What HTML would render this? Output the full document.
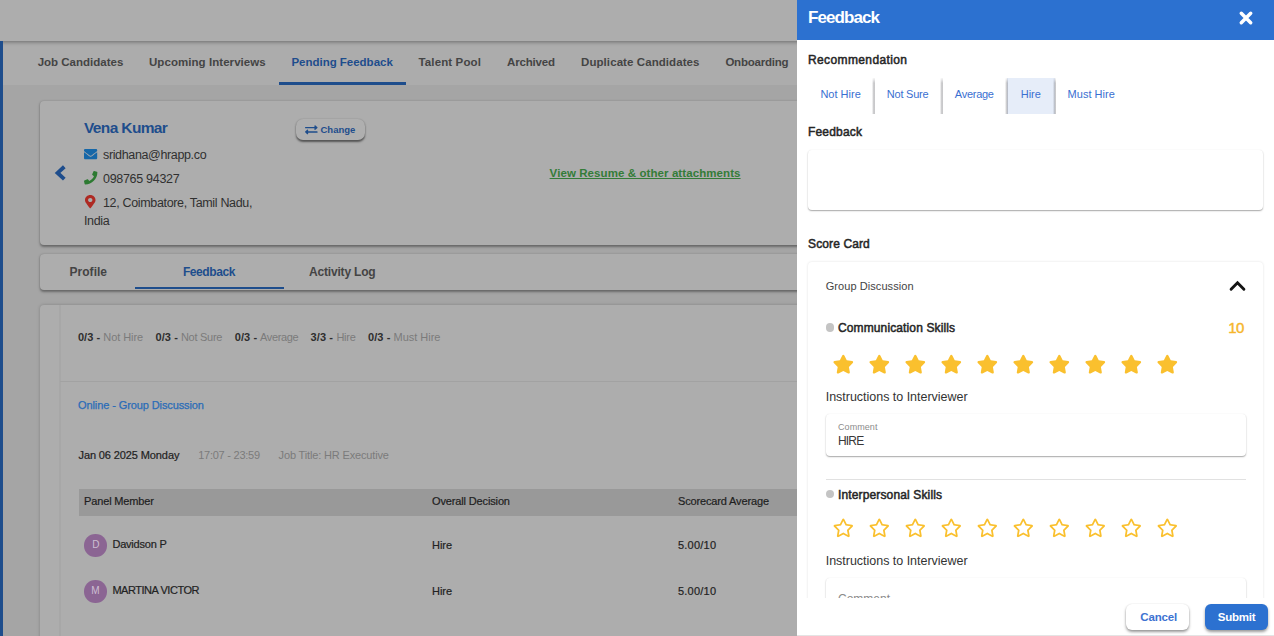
<!DOCTYPE html>
<html lang="en">
<head>
<meta charset="utf-8">
<title>Feedback</title>
<style>
*{box-sizing:border-box;margin:0;padding:0}
html,body{width:1274px;height:636px;overflow:hidden;background:#a5a5a5;font-family:"Liberation Sans",sans-serif}
.abs{position:absolute}
.t{position:absolute;white-space:nowrap;line-height:20px;height:20px;font-family:"Liberation Sans",sans-serif}
#bg{position:absolute;left:0;top:0;width:1274px;height:636px;overflow:hidden;background:#a5a5a5}
#panel{position:absolute;left:0;top:0;width:1274px;height:636px;overflow:hidden;pointer-events:none}
svg{position:absolute;overflow:visible}
</style>
</head>
<body>
<div id="bg">
  <!-- tab bar -->
  <div class="abs" style="left:0;top:41px;width:1274px;height:44px;background:#acacac"></div>
  <!-- top bar -->
  <div class="abs" style="left:0;top:0;width:1274px;height:41px;background:#adadad;box-shadow:0 1px 4px rgba(0,0,0,.38)"></div>
  <!-- left blue stripe -->
  <div class="abs" style="left:0;top:41px;width:3.400px;height:600px;background:#1e4d8c"></div>
  <!-- active tab indicator -->
  <div class="abs" style="left:279px;top:81.9px;width:126.5px;height:2.9px;background:#1e4d8c"></div>

  <!-- candidate card -->
  <div class="abs" style="left:39.5px;top:101px;width:1196px;height:144px;background:#adadad;border-radius:4px;box-shadow:0 1.500px 2.500px rgba(0,0,0,.36),0 0 2px rgba(0,0,0,.10)"></div>
  <!-- back chevron -->
  <svg style="left:54px;top:164px" width="13" height="18" viewBox="0 0 13 18"><polyline points="10.300,2.700 3.600,8.900 10.300,15.100" fill="none" stroke="#1e4d8c" stroke-width="3.900" stroke-linecap="butt" stroke-linejoin="miter"/></svg>
  <!-- mail icon -->
  <svg style="left:84px;top:149px" width="13.2" height="10.2" viewBox="0 64 512 384" preserveAspectRatio="none"><path fill="#1667a8" d="M502.3 190.800c3.900-3.100 9.700-.200 9.700 4.700V400c0 26.500-21.500 48-48 48H48c-26.500 0-48-21.500-48-48V195.600c0-5 5.700-7.800 9.700-4.700 22.400 17.400 52.100 39.500 154.100 113.600 21.100 15.400 56.700 47.800 92.200 47.600 35.700.3 72-32.800 92.300-47.600 102-74.100 131.600-96.300 154-113.700zM256 320c23.200.4 56.600-29.200 73.400-41.400 132.700-96.300 142.800-104.700 173.400-128.700 5.800-4.500 9.200-11.500 9.200-18.900v-19c0-26.500-21.500-48-48-48H48C21.500 64 0 85.500 0 112v19c0 7.400 3.400 14.300 9.200 18.900 30.600 23.900 40.700 32.400 173.400 128.700 16.800 12.200 50.200 41.800 73.400 41.400z"/></svg>
  <!-- phone icon -->
  <svg style="left:84px;top:171.2px" width="13.4" height="13.4" viewBox="0 0 512 512"><path fill="#2d7a32" d="M493.400 24.600l-104-24c-11.300-2.600-22.900 3.300-27.500 13.900l-48 112c-4.200 9.800-1.400 21.300 6.900 28l60.600 49.600c-36 76.700-98.900 140.500-177.200 177.200l-49.600-60.600c-6.800-8.300-18.200-11.100-28-6.900l-112 48C3.900 366.500-2 378.100.6 389.400l24 104C27.100 504.200 36.700 512 48 512c256.100 0 464-207.500 464-464 0-11.200-7.700-20.900-18.600-23.400z"/></svg>
  <!-- pin icon -->
  <svg style="left:85px;top:195.200px" width="10.500" height="13.200" viewBox="0 0 384 512" preserveAspectRatio="none"><path fill="#ae2a23" fill-rule="evenodd" d="M172.268 501.670C26.970 291.031 0 269.413 0 192 0 85.961 85.961 0 192 0s192 85.961 192 192c0 77.413-26.970 99.031-172.268 309.670-9.535 13.774-29.930 13.773-39.464 0zM192 272c44.183 0 80-35.817 80-80s-35.817-80-80-80-80 35.817-80 80 35.817 80 80 80z"/></svg>
  <!-- change button -->
  <div class="abs" style="left:296px;top:119.200px;width:69px;height:20.600px;background:#afafaf;border-radius:7px;box-shadow:0 1.500px 2px rgba(0,0,0,.5),0 0 2px rgba(0,0,0,.08)"></div>
  <svg style="left:304.600px;top:123.600px" width="12.600" height="11.600" viewBox="0 0 512 512" preserveAspectRatio="none"><path fill="#1e4d8c" d="M0 168v-16c0-13.255 10.745-24 24-24h360V80c0-21.367 25.899-32.042 40.971-16.971l80 80c9.372 9.373 9.372 24.569 0 33.941l-80 80C409.956 271.982 384 261.456 384 240v-48H24c-13.255 0-24-10.745-24-24zm488 152H128v-48c0-21.314-25.862-32.080-40.971-16.971l-80 80c-9.372 9.373-9.372 24.569 0 33.941l80 80C102.057 463.997 128 453.437 128 432v-48h360c13.255 0 24-10.745 24-24v-16c0-13.255-10.745-24-24-24z"/></svg>

  <!-- sub tabs card -->
  <div class="abs" style="left:39.500px;top:254px;width:1196px;height:35.700px;background:#adadad;border-radius:4px;box-shadow:0 1.500px 2.500px rgba(0,0,0,.36),0 0 2px rgba(0,0,0,.10)"></div>
  <div class="abs" style="left:134.700px;top:287.200px;width:149.500px;height:2.300px;background:#1e4d8c"></div>

  <!-- feedback content card -->
  <div class="abs" style="left:39.500px;top:305px;width:1196px;height:340px;background:#adadad;border-radius:4px;box-shadow:0 0 3.500px rgba(0,0,0,.22)"></div>
  <div class="abs" style="left:58.700px;top:305px;width:2px;height:340px;background:linear-gradient(90deg,rgba(0,0,0,0),rgba(0,0,0,.075) 50%,rgba(0,0,0,0))"></div>
  <div class="abs" style="left:60px;top:381.400px;width:1176px;height:1px;background:#a2a2a2"></div>
  <!-- table header -->
  <div class="abs" style="left:78.500px;top:489.300px;width:1140px;height:26.600px;background:#999999"></div>
  <!-- avatars -->
  <div class="abs" style="left:84.200px;top:534.100px;width:22.500px;height:22.500px;border-radius:50%;background:#8b6593"></div>
  <div class="abs" style="left:84.200px;top:580.300px;width:22.500px;height:22.500px;border-radius:50%;background:#8b6593"></div>
<span class="t" style="left:37.7px;top:52.2px;font-size:11.5px;font-weight:700;color:#444444;letter-spacing:-0.003px;">Job Candidates</span>
<span class="t" style="left:149.0px;top:52.2px;font-size:11.5px;font-weight:700;color:#444444;letter-spacing:0.057px;">Upcoming Interviews</span>
<span class="t" style="left:418.5px;top:52.2px;font-size:11.5px;font-weight:700;color:#444444;letter-spacing:0.127px;">Talent Pool</span>
<span class="t" style="left:507.0px;top:52.2px;font-size:11.5px;font-weight:700;color:#444444;letter-spacing:-0.174px;">Archived</span>
<span class="t" style="left:581.0px;top:52.2px;font-size:11.5px;font-weight:700;color:#444444;letter-spacing:0.081px;">Duplicate Candidates</span>
<span class="t" style="left:725.4px;top:52.2px;font-size:11.5px;font-weight:700;color:#444444;letter-spacing:-0.230px;">Onboarding</span>
<span class="t" style="left:291.4px;top:52.2px;font-size:11.5px;font-weight:700;color:#1e4d8c;letter-spacing:-0.014px;">Pending Feedback</span>
<span class="t" style="left:84.0px;top:118.1px;font-size:15.5px;font-weight:700;color:#1e4d8c;letter-spacing:-0.634px;">Vena Kumar</span>
<span class="t" style="left:320.5px;top:119.9px;font-size:9.5px;font-weight:700;color:#1e4d8c;letter-spacing:-0.009px;">Change</span>
<span class="t" style="left:103.0px;top:144.6px;font-size:12.5px;font-weight:400;color:#303030;letter-spacing:-0.356px;">sridhana@hrapp.co</span>
<span class="t" style="left:103.0px;top:168.5px;font-size:12.5px;font-weight:400;color:#303030;letter-spacing:-0.296px;">098765 94327</span>
<span class="t" style="left:103.0px;top:192.7px;font-size:12.5px;font-weight:400;color:#303030;letter-spacing:-0.338px;">12, Coimbatore, Tamil Nadu,</span>
<span class="t" style="left:84.0px;top:211.0px;font-size:12.5px;font-weight:400;color:#303030;letter-spacing:-0.352px;">India</span>
<span class="t" style="left:549.6px;top:163.1px;font-size:11.5px;font-weight:700;color:#347c38;letter-spacing:0.086px;text-decoration:underline;">View Resume &amp; other attachments</span>
<span class="t" style="left:69.6px;top:261.6px;font-size:12px;font-weight:700;color:#444444;letter-spacing:0.009px;">Profile</span>
<span class="t" style="left:182.9px;top:261.6px;font-size:12px;font-weight:700;color:#1e4d8c;letter-spacing:-0.408px;">Feedback</span>
<span class="t" style="left:309.0px;top:261.6px;font-size:12px;font-weight:700;color:#444444;letter-spacing:-0.179px;">Activity Log</span>
<span class="t" style="left:77.9px;top:326.7px;font-size:11px;font-weight:700;color:#2e2e2e;letter-spacing:0.096px;">0/3 -</span>
<span class="t" style="left:103.3px;top:326.7px;font-size:11px;font-weight:400;color:#7b7b7b;letter-spacing:-0.063px;">Not Hire</span>
<span class="t" style="left:155.5px;top:326.7px;font-size:11px;font-weight:700;color:#2e2e2e;letter-spacing:0.096px;">0/3 -</span>
<span class="t" style="left:180.9px;top:326.7px;font-size:11px;font-weight:400;color:#7b7b7b;letter-spacing:-0.260px;">Not Sure</span>
<span class="t" style="left:234.7px;top:326.7px;font-size:11px;font-weight:700;color:#2e2e2e;letter-spacing:0.096px;">0/3 -</span>
<span class="t" style="left:260.0px;top:326.7px;font-size:11px;font-weight:400;color:#7b7b7b;letter-spacing:-0.347px;">Average</span>
<span class="t" style="left:310.6px;top:326.7px;font-size:11px;font-weight:700;color:#2e2e2e;letter-spacing:0.096px;">3/3 -</span>
<span class="t" style="left:336.4px;top:326.7px;font-size:11px;font-weight:400;color:#7b7b7b;letter-spacing:-0.257px;">Hire</span>
<span class="t" style="left:368.0px;top:326.7px;font-size:11px;font-weight:700;color:#2e2e2e;letter-spacing:0.096px;">0/3 -</span>
<span class="t" style="left:393.5px;top:326.7px;font-size:11px;font-weight:400;color:#7b7b7b;letter-spacing:-0.020px;">Must Hire</span>
<span class="t" style="left:78.0px;top:395.0px;font-size:11px;font-weight:400;color:#2a6cb8;letter-spacing:-0.100px;-webkit-text-stroke:0.25px #2a6cb8;">Online - Group Discussion</span>
<span class="t" style="left:78.5px;top:445.0px;font-size:11px;font-weight:400;color:#222222;letter-spacing:-0.109px;-webkit-text-stroke:0.2px #222;">Jan 06 2025 Monday</span>
<span class="t" style="left:198.2px;top:445.0px;font-size:11px;font-weight:400;color:#7b7b7b;letter-spacing:-0.245px;">17:07 - 23:59</span>
<span class="t" style="left:278.6px;top:445.0px;font-size:11px;font-weight:400;color:#7b7b7b;letter-spacing:-0.151px;">Job Title: HR Executive</span>
<span class="t" style="left:84.0px;top:490.9px;font-size:11px;font-weight:400;color:#1e1e1e;letter-spacing:-0.141px;-webkit-text-stroke:0.2px #1e1e1e;">Panel Member</span>
<span class="t" style="left:432.0px;top:490.9px;font-size:11px;font-weight:400;color:#1e1e1e;letter-spacing:-0.140px;-webkit-text-stroke:0.2px #1e1e1e;">Overall Decision</span>
<span class="t" style="left:678.0px;top:490.9px;font-size:11px;font-weight:400;color:#1e1e1e;letter-spacing:-0.147px;-webkit-text-stroke:0.2px #1e1e1e;">Scorecard Average</span>
<span class="t" style="left:112.4px;top:534.0px;font-size:11px;font-weight:400;color:#222222;letter-spacing:-0.207px;-webkit-text-stroke:0.2px #222;">Davidson P</span>
<span class="t" style="left:432.0px;top:535.0px;font-size:11px;font-weight:400;color:#222222;letter-spacing:-0.057px;-webkit-text-stroke:0.2px #222;">Hire</span>
<span class="t" style="left:678.0px;top:535.0px;font-size:11px;font-weight:400;color:#222222;letter-spacing:0.216px;-webkit-text-stroke:0.2px #222;">5.00/10</span>
<span class="t" style="left:112.4px;top:580.0px;font-size:11px;font-weight:400;color:#222222;letter-spacing:-0.462px;-webkit-text-stroke:0.2px #222;">MARTINA VICTOR</span>
<span class="t" style="left:432.0px;top:581.0px;font-size:11px;font-weight:400;color:#222222;letter-spacing:-0.057px;-webkit-text-stroke:0.2px #222;">Hire</span>
<span class="t" style="left:678.0px;top:581.0px;font-size:11px;font-weight:400;color:#222222;letter-spacing:0.216px;-webkit-text-stroke:0.2px #222;">5.00/10</span>
<span class="t" style="left:92.2px;top:535.0px;font-size:10px;font-weight:400;color:#cdbfd2;letter-spacing:-0.634px;">D</span>
<span class="t" style="left:91.2px;top:581.0px;font-size:10px;font-weight:400;color:#cdbfd2;letter-spacing:0.256px;">M</span>
</div>

<div id="panel">
  <div class="abs" style="left:796.500px;top:0;width:478px;height:636px;background:#ffffff"></div>
  <!-- header -->
  <div class="abs" style="left:796.500px;top:0;width:478px;height:40px;background:#2c71d0"></div>
  <svg style="left:1238.500px;top:11.300px" width="14" height="14" viewBox="0 0 14 14"><path d="M2.300 2.300L11.700 11.700M11.700 2.300L2.300 11.700" stroke="#ffffff" stroke-width="3.500" stroke-linecap="round" fill="none"/></svg>

  <!-- recommendation toggle -->
  <div class="abs" style="left:808px;top:77.700px;width:318px;height:36px;background:#fff;border-radius:4px"></div>
  <div class="abs" style="left:1006.500px;top:77.700px;width:48px;height:36px;background:#e6edf9"></div>
  <div class="abs sep" style="left:872px;top:77.700px;width:3px;height:36px;background:linear-gradient(90deg,rgba(105,105,110,0),rgba(105,105,110,.22) 30%,rgba(105,105,110,.44) 70%,rgba(105,105,110,.26));-webkit-mask-image:linear-gradient(180deg,rgba(0,0,0,.15),#000 5px);mask-image:linear-gradient(180deg,rgba(0,0,0,.15),#000 5px)"></div>
  <div class="abs sep" style="left:940.200px;top:77.700px;width:3px;height:36px;background:linear-gradient(90deg,rgba(105,105,110,0),rgba(105,105,110,.22) 30%,rgba(105,105,110,.44) 70%,rgba(105,105,110,.26));-webkit-mask-image:linear-gradient(180deg,rgba(0,0,0,.15),#000 5px);mask-image:linear-gradient(180deg,rgba(0,0,0,.15),#000 5px)"></div>
  <div class="abs sep" style="left:1005.200px;top:77.700px;width:3px;height:36px;background:linear-gradient(90deg,rgba(105,105,110,0),rgba(105,105,110,.22) 30%,rgba(105,105,110,.44) 70%,rgba(105,105,110,.26));-webkit-mask-image:linear-gradient(180deg,rgba(0,0,0,.15),#000 5px);mask-image:linear-gradient(180deg,rgba(0,0,0,.15),#000 5px)"></div>
  <div class="abs sep" style="left:1053.200px;top:77.700px;width:3px;height:36px;background:linear-gradient(90deg,rgba(105,105,110,0),rgba(105,105,110,.22) 30%,rgba(105,105,110,.44) 70%,rgba(105,105,110,.26));-webkit-mask-image:linear-gradient(180deg,rgba(0,0,0,.15),#000 5px);mask-image:linear-gradient(180deg,rgba(0,0,0,.15),#000 5px)"></div>

  <!-- feedback textarea -->
  <div class="abs" style="left:808px;top:149.500px;width:455.300px;height:60.200px;background:#fff;border-radius:4px;box-shadow:0 1px 1.500px rgba(0,0,0,.34),0 0 1.500px rgba(0,0,0,.06)"></div>

  <!-- score card -->
  <div class="abs" style="left:808px;top:262px;width:455.400px;height:400px;background:#fff;border-radius:4px;box-shadow:0 0 2.500px rgba(0,0,0,.13)"></div>
  <svg style="left:1228.500px;top:279.700px" width="17" height="11" viewBox="0 0 17 11"><polyline points="2.100,9.200 8.500,2.800 14.900,9.200" fill="none" stroke="#141414" stroke-width="2.900" stroke-linecap="round" stroke-linejoin="miter"/></svg>
  <div class="abs" style="left:825.600px;top:323.400px;width:8.800px;height:8.800px;border-radius:50%;background:#c4c4c4"></div>
  <!-- stars filled -->
  <svg style="left:0;top:0" width="1274" height="636" viewBox="0 0 1274 636">
    <g fill="#fac02e">
      <path transform="translate(832.70 354.77) scale(0.03682)" d="M259.300 17.800L194 150.200 47.900 171.500c-26.200 3.800-36.700 36.100-17.700 54.600l105.700 103-25 145.500c-4.500 26.300 23.200 46 46.400 33.700L288 439.600l130.700 68.700c23.200 12.200 50.900-7.400 46.400-33.700l-25-145.500 105.700-103c19-18.500 8.500-50.800-17.700-54.600L382 150.200 316.700 17.800c-11.700-23.600-45.600-23.900-57.400 0z"/>
      <path transform="translate(832.86 518.56) scale(0.03626)" d="M528.100 171.500L382 150.200 316.700 17.800c-11.700-23.600-45.600-23.900-57.400 0L194 150.200 47.900 171.500c-26.200 3.800-36.700 36.100-17.700 54.600l105.700 103-25 145.500c-4.500 26.300 23.200 46 46.400 33.700L288 439.600l130.700 68.700c23.200 12.200 50.900-7.400 46.400-33.700l-25-145.500 105.700-103c19-18.500 8.500-50.800-17.700-54.600zM388.600 312.300l23.700 138.400L288 385.400l-124.300 65.300 23.700-138.400-100.600-98 139-20.200 62.200-126 62.200 126 139 20.200-100.600 98z"/>
      <path transform="translate(868.70 354.77) scale(0.03682)" d="M259.300 17.800L194 150.200 47.900 171.500c-26.200 3.800-36.700 36.100-17.700 54.600l105.700 103-25 145.500c-4.500 26.300 23.200 46 46.400 33.700L288 439.600l130.700 68.700c23.200 12.200 50.900-7.400 46.400-33.700l-25-145.500 105.700-103c19-18.500 8.500-50.800-17.700-54.600L382 150.200 316.700 17.800c-11.700-23.600-45.600-23.900-57.400 0z"/>
      <path transform="translate(868.86 518.56) scale(0.03626)" d="M528.100 171.500L382 150.200 316.700 17.800c-11.700-23.600-45.600-23.900-57.400 0L194 150.200 47.900 171.500c-26.200 3.800-36.700 36.100-17.700 54.600l105.700 103-25 145.500c-4.500 26.300 23.200 46 46.400 33.700L288 439.600l130.700 68.700c23.200 12.200 50.900-7.400 46.400-33.700l-25-145.500 105.700-103c19-18.500 8.500-50.800-17.700-54.600zM388.600 312.300l23.700 138.400L288 385.400l-124.300 65.300 23.700-138.400-100.600-98 139-20.200 62.200-126 62.200 126 139 20.200-100.600 98z"/>
      <path transform="translate(904.70 354.77) scale(0.03682)" d="M259.300 17.800L194 150.200 47.900 171.500c-26.200 3.800-36.700 36.100-17.700 54.600l105.700 103-25 145.500c-4.500 26.300 23.200 46 46.400 33.700L288 439.600l130.700 68.700c23.200 12.200 50.900-7.400 46.400-33.700l-25-145.500 105.700-103c19-18.500 8.500-50.800-17.700-54.600L382 150.200 316.700 17.800c-11.700-23.600-45.600-23.900-57.400 0z"/>
      <path transform="translate(904.86 518.56) scale(0.03626)" d="M528.100 171.500L382 150.200 316.700 17.800c-11.700-23.600-45.600-23.900-57.400 0L194 150.200 47.900 171.500c-26.200 3.800-36.700 36.100-17.700 54.600l105.700 103-25 145.500c-4.500 26.300 23.200 46 46.400 33.700L288 439.600l130.700 68.700c23.200 12.200 50.900-7.400 46.400-33.700l-25-145.500 105.700-103c19-18.500 8.500-50.800-17.700-54.600zM388.600 312.300l23.700 138.400L288 385.400l-124.300 65.300 23.700-138.400-100.600-98 139-20.200 62.200-126 62.200 126 139 20.200-100.600 98z"/>
      <path transform="translate(940.70 354.77) scale(0.03682)" d="M259.300 17.800L194 150.200 47.900 171.500c-26.200 3.800-36.700 36.100-17.700 54.600l105.700 103-25 145.500c-4.500 26.300 23.200 46 46.400 33.700L288 439.600l130.700 68.700c23.200 12.200 50.900-7.400 46.400-33.700l-25-145.500 105.700-103c19-18.500 8.500-50.800-17.700-54.600L382 150.200 316.700 17.800c-11.700-23.600-45.600-23.900-57.400 0z"/>
      <path transform="translate(940.86 518.56) scale(0.03626)" d="M528.100 171.500L382 150.200 316.700 17.800c-11.700-23.600-45.600-23.900-57.400 0L194 150.200 47.900 171.500c-26.200 3.800-36.700 36.100-17.700 54.600l105.700 103-25 145.500c-4.500 26.300 23.200 46 46.400 33.700L288 439.600l130.700 68.700c23.200 12.200 50.900-7.400 46.400-33.700l-25-145.500 105.700-103c19-18.500 8.500-50.800-17.700-54.600zM388.600 312.300l23.700 138.400L288 385.400l-124.300 65.300 23.700-138.400-100.600-98 139-20.200 62.200-126 62.200 126 139 20.200-100.600 98z"/>
      <path transform="translate(976.70 354.77) scale(0.03682)" d="M259.300 17.800L194 150.200 47.900 171.500c-26.200 3.800-36.700 36.100-17.700 54.600l105.700 103-25 145.500c-4.500 26.300 23.200 46 46.400 33.700L288 439.600l130.700 68.700c23.200 12.200 50.900-7.400 46.400-33.700l-25-145.500 105.700-103c19-18.500 8.500-50.800-17.700-54.600L382 150.200 316.700 17.800c-11.700-23.600-45.600-23.900-57.400 0z"/>
      <path transform="translate(976.86 518.56) scale(0.03626)" d="M528.100 171.500L382 150.200 316.700 17.800c-11.700-23.600-45.600-23.900-57.400 0L194 150.200 47.900 171.500c-26.200 3.800-36.700 36.100-17.700 54.600l105.700 103-25 145.500c-4.500 26.300 23.200 46 46.400 33.700L288 439.600l130.700 68.700c23.200 12.200 50.900-7.400 46.400-33.700l-25-145.500 105.700-103c19-18.500 8.500-50.800-17.700-54.600zM388.600 312.300l23.700 138.400L288 385.400l-124.300 65.300 23.700-138.400-100.600-98 139-20.200 62.200-126 62.200 126 139 20.200-100.600 98z"/>
      <path transform="translate(1012.70 354.77) scale(0.03682)" d="M259.300 17.800L194 150.200 47.900 171.500c-26.200 3.800-36.700 36.100-17.700 54.600l105.700 103-25 145.500c-4.500 26.300 23.200 46 46.400 33.700L288 439.600l130.700 68.700c23.200 12.200 50.900-7.400 46.400-33.700l-25-145.500 105.700-103c19-18.500 8.500-50.800-17.700-54.600L382 150.200 316.700 17.800c-11.700-23.600-45.600-23.900-57.400 0z"/>
      <path transform="translate(1012.86 518.56) scale(0.03626)" d="M528.100 171.500L382 150.200 316.700 17.800c-11.700-23.600-45.600-23.900-57.400 0L194 150.200 47.900 171.500c-26.200 3.800-36.700 36.100-17.700 54.600l105.700 103-25 145.500c-4.500 26.300 23.200 46 46.400 33.700L288 439.600l130.700 68.700c23.200 12.200 50.900-7.400 46.400-33.700l-25-145.500 105.700-103c19-18.500 8.500-50.800-17.700-54.600zM388.600 312.300l23.700 138.400L288 385.400l-124.300 65.300 23.700-138.400-100.600-98 139-20.200 62.200-126 62.200 126 139 20.200-100.600 98z"/>
      <path transform="translate(1048.70 354.77) scale(0.03682)" d="M259.300 17.800L194 150.200 47.900 171.500c-26.200 3.800-36.700 36.100-17.700 54.600l105.700 103-25 145.500c-4.500 26.300 23.200 46 46.400 33.700L288 439.600l130.700 68.700c23.200 12.200 50.900-7.400 46.400-33.700l-25-145.500 105.700-103c19-18.500 8.500-50.800-17.700-54.600L382 150.200 316.700 17.800c-11.700-23.600-45.600-23.900-57.400 0z"/>
      <path transform="translate(1048.86 518.56) scale(0.03626)" d="M528.100 171.500L382 150.200 316.700 17.800c-11.700-23.600-45.600-23.900-57.400 0L194 150.200 47.900 171.500c-26.200 3.800-36.700 36.100-17.700 54.600l105.700 103-25 145.500c-4.500 26.300 23.200 46 46.400 33.700L288 439.600l130.700 68.700c23.200 12.200 50.900-7.400 46.400-33.700l-25-145.500 105.700-103c19-18.500 8.500-50.800-17.700-54.600zM388.600 312.300l23.700 138.400L288 385.400l-124.300 65.300 23.700-138.400-100.600-98 139-20.200 62.200-126 62.200 126 139 20.200-100.600 98z"/>
      <path transform="translate(1084.70 354.77) scale(0.03682)" d="M259.300 17.800L194 150.200 47.900 171.500c-26.200 3.800-36.700 36.100-17.700 54.600l105.700 103-25 145.500c-4.500 26.300 23.200 46 46.400 33.700L288 439.600l130.700 68.700c23.200 12.200 50.900-7.400 46.400-33.700l-25-145.500 105.700-103c19-18.500 8.500-50.800-17.700-54.600L382 150.200 316.700 17.800c-11.700-23.600-45.600-23.900-57.400 0z"/>
      <path transform="translate(1084.86 518.56) scale(0.03626)" d="M528.100 171.500L382 150.200 316.700 17.800c-11.700-23.600-45.600-23.900-57.400 0L194 150.200 47.900 171.500c-26.200 3.800-36.700 36.100-17.700 54.600l105.700 103-25 145.500c-4.500 26.300 23.200 46 46.400 33.700L288 439.600l130.700 68.700c23.200 12.200 50.900-7.400 46.400-33.700l-25-145.500 105.700-103c19-18.500 8.500-50.800-17.700-54.600zM388.600 312.300l23.700 138.400L288 385.400l-124.300 65.300 23.700-138.400-100.600-98 139-20.200 62.200-126 62.200 126 139 20.200-100.600 98z"/>
      <path transform="translate(1120.70 354.77) scale(0.03682)" d="M259.300 17.800L194 150.200 47.900 171.500c-26.200 3.800-36.700 36.100-17.700 54.600l105.700 103-25 145.500c-4.500 26.300 23.200 46 46.400 33.700L288 439.600l130.700 68.700c23.200 12.200 50.900-7.400 46.400-33.700l-25-145.500 105.700-103c19-18.500 8.500-50.800-17.700-54.600L382 150.200 316.700 17.800c-11.700-23.600-45.600-23.900-57.400 0z"/>
      <path transform="translate(1120.86 518.56) scale(0.03626)" d="M528.100 171.500L382 150.200 316.700 17.800c-11.700-23.600-45.600-23.900-57.400 0L194 150.200 47.900 171.500c-26.200 3.800-36.700 36.100-17.700 54.600l105.700 103-25 145.500c-4.500 26.300 23.200 46 46.400 33.700L288 439.600l130.700 68.700c23.200 12.200 50.900-7.400 46.400-33.700l-25-145.500 105.700-103c19-18.500 8.500-50.800-17.700-54.600zM388.600 312.300l23.700 138.400L288 385.400l-124.300 65.300 23.700-138.400-100.600-98 139-20.200 62.200-126 62.200 126 139 20.200-100.600 98z"/>
      <path transform="translate(1156.70 354.77) scale(0.03682)" d="M259.300 17.800L194 150.200 47.900 171.500c-26.200 3.800-36.700 36.100-17.700 54.600l105.700 103-25 145.500c-4.500 26.300 23.200 46 46.400 33.700L288 439.600l130.700 68.700c23.200 12.200 50.900-7.400 46.400-33.700l-25-145.500 105.700-103c19-18.500 8.500-50.800-17.700-54.600L382 150.200 316.700 17.800c-11.700-23.600-45.600-23.900-57.400 0z"/>
      <path transform="translate(1156.86 518.56) scale(0.03626)" d="M528.100 171.500L382 150.200 316.700 17.800c-11.700-23.600-45.600-23.900-57.400 0L194 150.200 47.900 171.500c-26.200 3.800-36.700 36.100-17.700 54.600l105.700 103-25 145.500c-4.500 26.300 23.200 46 46.400 33.700L288 439.600l130.700 68.700c23.200 12.200 50.900-7.400 46.400-33.700l-25-145.500 105.700-103c19-18.500 8.500-50.800-17.700-54.600zM388.600 312.300l23.700 138.400L288 385.400l-124.300 65.300 23.700-138.400-100.600-98 139-20.200 62.200-126 62.200 126 139 20.200-100.600 98z"/>
    </g>
  </svg>
  <!-- comment box 1 -->
  <div class="abs" style="left:825.700px;top:414px;width:420.200px;height:41.700px;background:#fff;border-radius:4px;box-shadow:0 1px 1.500px rgba(0,0,0,.34),0 0 1.500px rgba(0,0,0,.06)"></div>
  <div class="abs" style="left:825.700px;top:478.500px;width:420px;height:1px;background:#e1e1e1"></div>
  <div class="abs" style="left:825.600px;top:489.600px;width:8.800px;height:8.800px;border-radius:50%;background:#c4c4c4"></div>
  <!-- comment box 2 -->
  <div class="abs" style="left:825.700px;top:578px;width:420.200px;height:41.700px;background:#fff;border-radius:4px;box-shadow:0 1px 1.500px rgba(0,0,0,.34),0 0 1.500px rgba(0,0,0,.06)"></div>
<span class="t" style="left:838.0px;top:589.0px;font-size:12px;font-weight:400;color:#8a8a8a;letter-spacing:-0.003px;">Comment</span>
  <!-- footer -->
  <div class="abs" style="left:796.500px;top:597.700px;width:478px;height:39px;background:#fff"></div>
  <div class="abs" style="left:796.500px;top:635px;width:478px;height:1px;background:#e4e4e4"></div>
  <div class="abs" style="left:1126.200px;top:604px;width:63.300px;height:26px;background:#fff;border-radius:6px;box-shadow:0 2px 3px rgba(0,0,0,.4),0 0 1.500px rgba(0,0,0,.12)"></div>
  <div class="abs" style="left:1204.500px;top:604px;width:63.800px;height:26px;background:#2c71d0;border-radius:6px;box-shadow:0 2px 3px rgba(0,0,0,.4)"></div>
<span class="t" style="left:808.0px;top:7.5px;font-size:17px;font-weight:700;color:#ffffff;letter-spacing:-0.920px;">Feedback</span>
<span class="t" style="left:808.0px;top:49.9px;font-size:12px;font-weight:400;color:#262626;letter-spacing:0.380px;-webkit-text-stroke:0.5px #262626;">Recommendation</span>
<span class="t" style="left:820.4px;top:84.0px;font-size:11px;font-weight:400;color:#3a6fd1;letter-spacing:0.008px;">Not Hire</span>
<span class="t" style="left:886.8px;top:84.0px;font-size:11px;font-weight:400;color:#3a6fd1;letter-spacing:-0.217px;">Not Sure</span>
<span class="t" style="left:954.8px;top:84.0px;font-size:11px;font-weight:400;color:#3a6fd1;letter-spacing:-0.264px;">Average</span>
<span class="t" style="left:1020.8px;top:84.0px;font-size:11px;font-weight:400;color:#3a6fd1;letter-spacing:-0.057px;">Hire</span>
<span class="t" style="left:1067.6px;top:84.0px;font-size:11px;font-weight:400;color:#3a6fd1;letter-spacing:0.017px;">Must Hire</span>
<span class="t" style="left:808.0px;top:121.9px;font-size:12px;font-weight:400;color:#262626;letter-spacing:0.185px;-webkit-text-stroke:0.5px #262626;">Feedback</span>
<span class="t" style="left:808.0px;top:233.9px;font-size:12px;font-weight:400;color:#262626;letter-spacing:0.122px;-webkit-text-stroke:0.5px #262626;">Score Card</span>
<span class="t" style="left:825.7px;top:276.2px;font-size:11px;font-weight:400;color:#444444;letter-spacing:0.071px;">Group Discussion</span>
<span class="t" style="left:838.0px;top:318.1px;font-size:12px;font-weight:400;color:#262626;letter-spacing:0.121px;-webkit-text-stroke:0.5px #262626;">Communication Skills</span>
<span class="t" style="left:1228.2px;top:317.6px;font-size:15px;font-weight:400;color:#f6b62c;letter-spacing:-0.487px;-webkit-text-stroke:0.45px #f6b62c;">10</span>
<span class="t" style="left:825.7px;top:386.9px;font-size:12.5px;font-weight:400;color:#333333;letter-spacing:-0.020px;">Instructions to Interviewer</span>
<span class="t" style="left:838.0px;top:416.8px;font-size:9px;font-weight:400;color:#8c8c8c;letter-spacing:0.064px;">Comment</span>
<span class="t" style="left:838.0px;top:430.6px;font-size:12px;font-weight:400;color:#383838;letter-spacing:-0.824px;">HIRE</span>
<span class="t" style="left:838.0px;top:485.0px;font-size:12px;font-weight:400;color:#262626;letter-spacing:0.137px;-webkit-text-stroke:0.5px #262626;">Interpersonal Skills</span>
<span class="t" style="left:825.7px;top:551.1px;font-size:12.5px;font-weight:400;color:#333333;letter-spacing:-0.020px;">Instructions to Interviewer</span>
<span class="t" style="left:1140.3px;top:606.9px;font-size:11.5px;font-weight:700;color:#3d73d2;letter-spacing:-0.164px;">Cancel</span>
<span class="t" style="left:1217.7px;top:606.9px;font-size:11.5px;font-weight:700;color:#ffffff;letter-spacing:-0.197px;">Submit</span>
</div>
</body>
</html>
